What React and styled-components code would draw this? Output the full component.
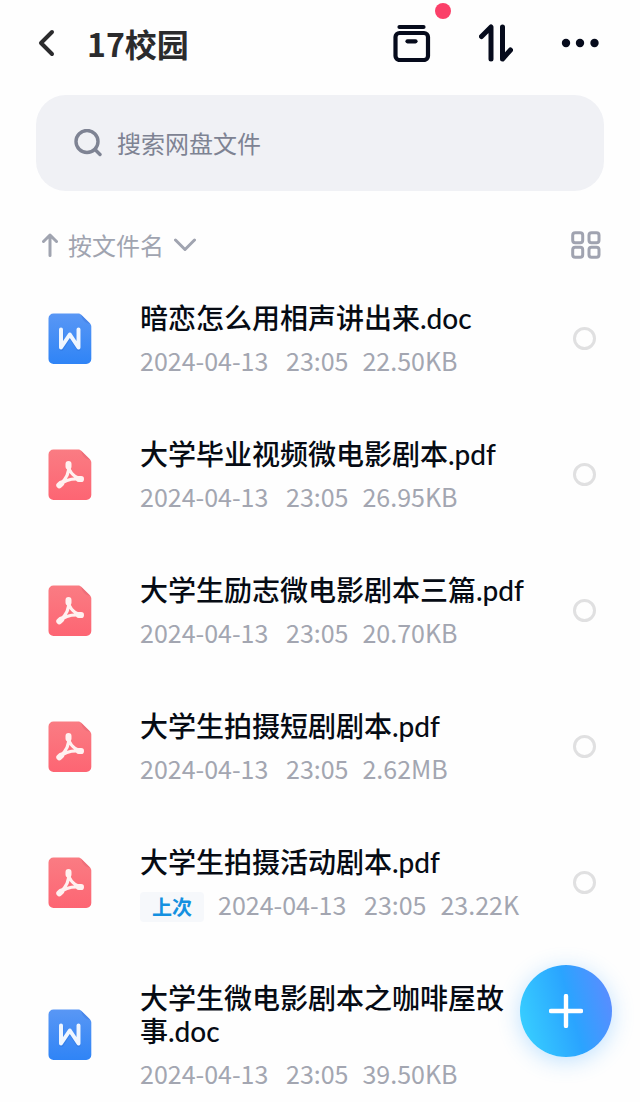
import React from 'react';
import styled, { createGlobalStyle } from 'styled-components';

const files = [
  { name: '暗恋怎么用相声讲出来.doc', type: 'doc', size: '22.50KB' },
  { name: '大学毕业视频微电影剧本.pdf', type: 'pdf', size: '26.95KB' },
  { name: '大学生励志微电影剧本三篇.pdf', type: 'pdf', size: '20.70KB' },
  { name: '大学生拍摄短剧剧本.pdf', type: 'pdf', size: '2.62MB' },
  { name: '大学生拍摄活动剧本.pdf', type: 'pdf', size: '23.22K', last: true },
  { name: '大学生微电影剧本之咖啡屋故事.doc', type: 'doc', size: '39.50KB' },
];

const sheet =
  'M5.500 .5H30c1.300 0 2.400 .5 3.300 1.400L42 10.400c.9 .9 1.300 1.900 1.300 3.200V46a5 5 0 0 1-5 5H5.500a5 5 0 0 1-5-5V5.500a5 5 0 0 1 5-5z';
const fold = 'M33 1.600 42.300 10.700c-4 .3-8-3-9.300-9.100z';

const DocIcon = () => (
  <svg width="44" height="52" viewBox="0 0 44 52" aria-hidden="true">
    <defs>
      <linearGradient id="docFill" x1="0" y1="0" x2="0" y2="1">
        <stop offset="0" stopColor="#5997f5" />
        <stop offset="1" stopColor="#2f84f6" />
      </linearGradient>
    </defs>
    <path d={sheet} fill="url(#docFill)" />
    <path d={fold} fill="#4a87ea" />
    <g fill="none" strokeWidth="4" strokeLinecap="round" strokeLinejoin="round">
      <path d="M13.500 18v18l8.500-13L30.500 36V18" stroke="#1f63cc" strokeOpacity=".3" />
      <path d="M13 16.500v18l8.800-13 8.700 13v-18" stroke="#eff6ff" />
    </g>
  </svg>
);

const PdfIcon = () => (
  <svg width="44" height="52" viewBox="0 0 44 52" aria-hidden="true">
    <defs>
      <linearGradient id="pdfFill" x1="0" y1="0" x2="0" y2="1">
        <stop offset="0" stopColor="#fa7c83" />
        <stop offset="1" stopColor="#fd6573" />
      </linearGradient>
    </defs>
    <path d={sheet} fill="url(#pdfFill)" />
    <path d={fold} fill="#ee6f7a" />
    <g fill="none" stroke="#fff1f0" strokeLinecap="round" strokeLinejoin="round">
      <path
        d="M20.500 16c.2 5.500 4 11.500 12 14M20.500 16c1 7-2 14-9 20M11.500 36c4.500-4.500 12-6.800 21-6"
        strokeWidth="3.200"
      />
      <path d="M20.500 15v2.500M11.300 36.300l1.900-1.700M30.800 29.900l2.200 .1" strokeWidth="6" />
    </g>
  </svg>
);

const FileRow = ({ file }) => (
  <Row>
    {file.type === 'doc' ? <DocIcon /> : <PdfIcon />}
    <Info>
      <Name>{file.name}</Name>
      <Meta>
        {file.last && <Tag>上次</Tag>}
        <Day>2024-04-13</Day>
        <Detail>23:05</Detail>
        <Detail>{file.size}</Detail>
      </Meta>
    </Info>
    <Check type="checkbox" aria-label={file.name} />
  </Row>
);

export default function App() {
  return (
    <>
      <GlobalStyle />
      <Header>
        <IconButton aria-label="返回">
          <svg width="18" height="28" viewBox="0 0 18 28">
            <path
              d="M14 3 3 14l11 11"
              fill="none"
              stroke="#2b2b2d"
              strokeWidth="4"
              strokeLinecap="round"
              strokeLinejoin="round"
            />
          </svg>
        </IconButton>
        <Title>17校园</Title>
        <Actions>
          <IconButton aria-label="传输列表">
            <svg width="38" height="38" viewBox="0 0 38 38">
              <g fill="none" stroke="#060b1c" strokeWidth="4.200" strokeLinecap="round">
                <path d="M6.500 3h24" />
                <rect x="2.500" y="9" width="32.500" height="27" rx="4" />
                <path d="M14.500 17.300h8" />
              </g>
            </svg>
            <Dot />
          </IconButton>
          <IconButton aria-label="排序">
            <svg width="34" height="38" viewBox="0 0 34 38">
              <path
                d="M2.500 12.500 12 3v32M23.500 3v32l8-9"
                fill="none"
                stroke="#060b1c"
                strokeWidth="5"
                strokeLinecap="round"
                strokeLinejoin="round"
              />
            </svg>
          </IconButton>
          <IconButton aria-label="更多">
            <svg width="38" height="10" viewBox="0 0 38 10" fill="#060b1c">
              <circle cx="5" cy="5" r="4.200" />
              <circle cx="19" cy="5" r="4.200" />
              <circle cx="33.500" cy="5" r="4.200" />
            </svg>
          </IconButton>
        </Actions>
      </Header>

      <Search>
        <svg width="28" height="28" viewBox="0 0 28 28" aria-hidden="true">
          <g fill="none" stroke="#7e8393" strokeWidth="3.400" strokeLinecap="round">
            <circle cx="13" cy="12.500" r="11" />
            <path d="m21 20.500 5 5" />
          </g>
        </svg>
        <input type="search" placeholder="搜索网盘文件" aria-label="搜索网盘文件" />
      </Search>

      <SortBar>
        <SortButton>
          <svg width="16" height="24" viewBox="0 0 16 24">
            <path
              d="M8 22.500V2M1.500 8.500 8 2l6.500 6.500"
              fill="none"
              stroke="#a0a4b0"
              strokeWidth="3"
              strokeLinecap="round"
              strokeLinejoin="round"
            />
          </svg>
          按文件名
          <svg width="22" height="14" viewBox="0 0 22 14">
            <path
              d="m1.500 2 9.500 9.500L20.500 2"
              fill="none"
              stroke="#a0a4b0"
              strokeWidth="3"
              strokeLinecap="round"
              strokeLinejoin="round"
            />
          </svg>
        </SortButton>
        <IconButton aria-label="网格视图">
          <svg width="30" height="28" viewBox="0 0 30 28">
            <g fill="none" stroke="#a0a3b0" strokeWidth="3">
              <rect x="1.700" y="1.700" width="10" height="10" rx="2.500" />
              <rect x="18" y="1.700" width="10" height="10" rx="2.500" />
              <rect x="1.700" y="16.300" width="10" height="10" rx="2.500" />
              <rect x="18" y="16.300" width="10" height="10" rx="2.500" />
            </g>
          </svg>
        </IconButton>
      </SortBar>

      <List>
        {files.map((file) => (
          <FileRow key={file.name} file={file} />
        ))}
      </List>

      <AddButton aria-label="新建">
        <svg width="34" height="34" viewBox="0 0 34 34">
          <path
            d="M17 2v30M2 17h30"
            stroke="#fff"
            strokeWidth="4.400"
            strokeLinecap="round"
          />
        </svg>
      </AddButton>
    </>
  );
}

const GlobalStyle = createGlobalStyle`
  * {
    box-sizing: border-box;
    margin: 0;
    padding: 0;
  }

  body {
    background: #fefefe;
    font-family: 'Noto Sans CJK SC', sans-serif;
  }

  svg {
    display: block;
    flex-shrink: 0;
  }
`;

const Header = styled.header`
  display: flex;
  align-items: center;
  height: 86px;
  padding: 0 41px 0 38px;
`;

const Title = styled.h1`
  margin-left: 31px;
  color: #2b2b2d;
  font-size: 32px;
  line-height: 40px;
  font-weight: 700;
`;

const Actions = styled.div`
  display: flex;
  align-items: center;
  gap: 48px;
  margin-left: auto;
`;

const IconButton = styled.button`
  position: relative;
  border: 0;
  background: none;
  cursor: pointer;
`;

const Dot = styled.span`
  position: absolute;
  top: -21px;
  right: -20px;
  width: 16px;
  height: 16px;
  border-radius: 50%;
  background: #fb4069;
`;

const Search = styled.label`
  display: flex;
  align-items: center;
  gap: 15px;
  height: 96px;
  margin: 9px 36px 0;
  padding: 0 38px;
  border-radius: 30px;
  background: #f0f1f5;

  input {
    flex: 1;
    min-width: 0;
    padding-bottom: 2px;
    border: 0;
    outline: 0;
    background: none;
    color: #060b1c;
    font-family: inherit;
    font-size: 24px;
  }

  input::placeholder {
    color: #7e8393;
    opacity: 1;
  }
`;

const SortBar = styled.div`
  display: flex;
  align-items: center;
  justify-content: space-between;
  margin-top: 36px;
  padding: 0 39px 0 42px;
`;

const SortButton = styled.button`
  display: flex;
  align-items: center;
  gap: 10px;
  border: 0;
  background: none;
  color: #a0a4b0;
  font-family: inherit;
  font-size: 24px;
  line-height: 36px;
  cursor: pointer;
`;

const List = styled.ul`
  display: flex;
  flex-direction: column;
  gap: 63px;
  padding: 39px 44px 14px 48px;
  list-style: none;
`;

const Row = styled.li`
  display: flex;
  align-items: center;
`;

const Info = styled.div`
  flex: 1;
  min-width: 0;
  margin: 0 44px 0 48px;
`;

const Name = styled.h2`
  color: #060b14;
  font-family: Lato, 'Noto Sans CJK SC', sans-serif;
  font-size: 28px;
  line-height: 33px;
  font-weight: 500;
`;

const Meta = styled.p`
  display: flex;
  align-items: center;
  gap: 14px;
  height: 24px;
  margin-top: 16px;
  color: #a3a6b1;
  font-size: 25px;
  line-height: 24px;
`;

const Detail = styled.span`
  padding-bottom: 6px;
`;

const Day = styled(Detail)`
  min-width: 132px;
`;

const Tag = styled.span`
  padding: 0 12px;
  border-radius: 4px;
  background: #f6f8fb;
  color: #1490e0;
  font-size: 20px;
  line-height: 30px;
  font-weight: 700;
`;

const Check = styled.input`
  appearance: none;
  width: 23px;
  height: 23px;
  border: 3px solid #e0e0e1;
  border-radius: 50%;

  &:checked {
    border-color: #2b80f6;
    background: #2b80f6;
  }
`;

const AddButton = styled.button`
  position: fixed;
  right: 28px;
  bottom: 45px;
  display: grid;
  place-items: center;
  width: 92px;
  height: 92px;
  border: 0;
  border-radius: 50%;
  background: linear-gradient(75deg, #38d0ff 5%, #2aa4ff 55%, #5d8bff 95%);
  box-shadow: 0 4px 22px rgba(60, 165, 255, 0.32);
  cursor: pointer;
`;
